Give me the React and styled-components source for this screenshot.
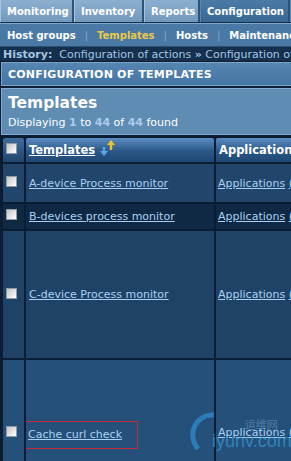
import styled, { createGlobalStyle } from "styled-components";

const GlobalStyle = createGlobalStyle`
  html, body {
    margin: 0;
    padding: 0;
    background: #0c1f35;
    overflow: hidden;
  }
  body {
    font-family: "DejaVu Sans", Verdana, sans-serif;
    font-size: 11px;
  }
`

const Page = styled.div`
  width: 440px;
  height: 461px;
  overflow: hidden;
  position: relative;
`

const MainMenu = styled.div`
  display: flex;
  height: 22px;
  background: #2d5278;
  border-bottom: 1px solid #14304d;
`
const MenuTab = styled.div`
  width: ${props => props.w}px;
  flex-shrink: 0;
  box-sizing: border-box;
  padding-left: 6px;
  display: flex;
  align-items: center;
  margin-right: 2px;
  color: #ffffff;
  font-weight: bold;
  font-size: 10px;
  background: ${props => props.active
    ? 'linear-gradient(#4a7aa6, #3a6892)'
    : 'linear-gradient(#8cafd0, #7399bd)'};
  border-left: 1px solid ${props => props.active ? '#5b88b3' : '#a7c3dd'};
`

const SubMenu = styled.div`
  height: 24px;
  display: flex;
  align-items: center;
  padding-left: 7px;
  background: #4b79a5;
  border-top: 1px solid #7fa6cb;
  border-bottom: 1px solid #2a4f77;
  box-sizing: border-box;
  color: #ffffff;
  font-weight: bold;
  font-size: 10px;
  white-space: nowrap;
`
const SubItem = styled.span`
  color: ${props => props.active ? '#e8c94a' : '#ffffff'};
`
const SubSep = styled.span`
  color: #86a8c8;
  font-weight: normal;
  margin: 0 9px;
`

const History = styled.div`
  height: 14px;
  display: flex;
  align-items: center;
  padding-left: 3px;
  color: #a5c5e4;
  white-space: nowrap;
  background: #15304d;
`
const HistoryLabel = styled.b`
  margin-right: 7px;
`

const TitleBar = styled.div`
  margin: 1px 1px 0 1px;
  height: 24px;
  box-sizing: border-box;
  display: flex;
  align-items: center;
  padding-left: 6px;
  background: linear-gradient(#5585b1, #4575a2);
  border: 1px solid #7ea5ca;
  color: #ffffff;
  font-weight: bold;
  font-size: 11px;
  letter-spacing: 0.2px;
  white-space: nowrap;
`

const ListHead = styled.div`
  margin: 2px 1px 0 1px;
  height: 47px;
  box-sizing: border-box;
  padding: 4px 6px 0 6px;
  background: #5e8cb3;
  border: 1px solid #86abcf;
  color: #ffffff;
`
const ListTitle = styled.div`
  font-weight: bold;
  font-size: 15.5px;
  line-height: 21px;
`
const Counter = styled.div`
  margin-top: 2px;
  font-size: 11px;
  white-space: nowrap;
`
const Num = styled.b`
  color: #a9cbec;
`

const Table = styled.div`
  margin-top: 1px;
  display: grid;
  grid-template-columns: 21px 188px 200px;
  column-gap: 2px;
  row-gap: 2px;
  padding: 2px 0 0 3px;
  background: #0b1d33;
`
const HeadCell = styled.div`
  height: 24px;
  display: flex;
  align-items: center;
  padding-left: ${props => props.pad || 0}px;
  background: ${props => props.first
    ? 'linear-gradient(#3e6c9c, #1f476f)'
    : 'linear-gradient(#5b8cc2, #2a5787 55%, #1f4874)'};
  border-radius: 2px 2px 0 0;
  color: #ffffff;
  font-weight: bold;
  font-size: 11.5px;
  white-space: nowrap;
  overflow: hidden;
`
const Cell = styled.div`
  height: ${props => props.h}px;
  display: flex;
  align-items: center;
  padding-left: ${props => props.pad || 0}px;
  background: ${props => props.bg};
  white-space: nowrap;
  overflow: hidden;
`
const Check = styled.span`
  width: 9px;
  height: 9px;
  flex-shrink: 0;
  margin-left: 3px;
  margin-top: ${props => props.up ? -4 : -3}px;
  background: linear-gradient(135deg, #c4c4c4, #ffffff);
  border: 1px solid #8e9aa6;
`
const Link = styled.a`
  color: #a9d0f2;
  text-decoration: underline;
  font-size: 11px;
  cursor: pointer;
`
const HeadLink = styled(Link)`
  color: #ffffff;
  font-weight: bold;
  font-size: 11.5px;
`
const Marked = styled.div`
  display: flex;
  align-items: center;
  box-sizing: border-box;
  width: 116px;
  height: 28px;
  padding-left: 5px;
  margin-left: -7px;
  margin-top: 4px;
  border: 1px solid #c42a3e;
`
const Mark = styled.div`
  position: absolute;
  left: 186px;
  top: 412px;
  pointer-events: none;
  opacity: 0.6;
  display: flex;
  color: #3aa7e6;
  font-family: "Liberation Sans", Arial, sans-serif;
`
const MarkText = styled.div`
  margin-left: -6px;
  display: flex;
  flex-direction: column;
  align-items: flex-end;
`
const MarkCn = styled.span`
  font-family: "Noto Sans CJK SC", sans-serif;
  font-size: 11px;
  color: #8fb8d8;
  margin-right: 14px;
  margin-top: 4px;
  opacity: 0.7;
`
const MarkEn = styled.span`
  font-size: 18px;
  line-height: 18px;
`

function SortArrows(){
  return <svg width="18" height="18" viewBox="0 0 18 18" style={{marginLeft: 4, marginTop: -4}}>
    <path d="M5 8 v5" stroke="#5aa6e6" strokeWidth="2.4"/>
    <path d="M1 12 h8 l-4 5 z" fill="#5aa6e6"/>
    <path d="M12 5 v6" stroke="#f2c222" strokeWidth="2.4"/>
    <path d="M8 6 h8 l-4 -5 z" fill="#f2c222"/>
  </svg>
}

const rows = [
  { name: "A-device Process monitor", h: 38, bg: "#22466b" },
  { name: "B-devices process monitor", h: 25, bg: "#0f2945", up: true },
  { name: "C-device Process monitor", h: 127, bg: "#1f4366" },
  { name: "Cache curl check", h: 145, bg: "#25507a", marked: true },
]

export default function App(){
  return <>
    <GlobalStyle/>
    <Page>
      <MainMenu>
        <MenuTab w={72}>Monitoring</MenuTab>
        <MenuTab w={68}>Inventory</MenuTab>
        <MenuTab w={54}>Reports</MenuTab>
        <MenuTab w={88} active>Configuration</MenuTab>
        <MenuTab w={90} active>Administration</MenuTab>
      </MainMenu>
      <SubMenu>
        <SubItem>Host groups</SubItem><SubSep>|</SubSep>
        <SubItem active>Templates</SubItem><SubSep>|</SubSep>
        <SubItem>Hosts</SubItem><SubSep>|</SubSep>
        <SubItem>Maintenance</SubItem>
      </SubMenu>
      <History>
        <HistoryLabel>History:</HistoryLabel>
        Configuration of actions&nbsp;<b>»</b>&nbsp;Configuration of templates
      </History>
      <TitleBar>CONFIGURATION OF TEMPLATES</TitleBar>
      <ListHead>
        <ListTitle>Templates</ListTitle>
        <Counter>Displaying <Num>1</Num> to <Num>44</Num> of <Num>44</Num> found</Counter>
      </ListHead>
      <Table>
        <HeadCell first><Check up/></HeadCell>
        <HeadCell pad={3}><HeadLink>Templates</HeadLink><SortArrows/></HeadCell>
        <HeadCell pad={3}>Applications</HeadCell>
        {rows.map(r => [
          <Cell key={r.name + "c"} h={r.h} bg={r.bg}><Check up={r.up}/></Cell>,
          <Cell key={r.name + "n"} h={r.h} bg={r.bg} pad={3}>
            {r.marked
              ? <Marked><Link>{r.name}</Link></Marked>
              : <Link>{r.name}</Link>}
          </Cell>,
          <Cell key={r.name + "a"} h={r.h} bg={r.bg} pad={2}><Link>Applications</Link>&nbsp;<Link>(2)</Link></Cell>
        ])}
      </Table>
      <Mark>
        <svg width="32" height="40" viewBox="0 0 32 40">
          <path d="M28 3 C10 2 0 22 12 37" stroke="#2f9be0" strokeWidth="5" fill="none"/>
        </svg>
        <MarkText>
          <MarkCn>运维网</MarkCn>
          <MarkEn>iyunv.com</MarkEn>
        </MarkText>
      </Mark>
    </Page>
  </>
}
